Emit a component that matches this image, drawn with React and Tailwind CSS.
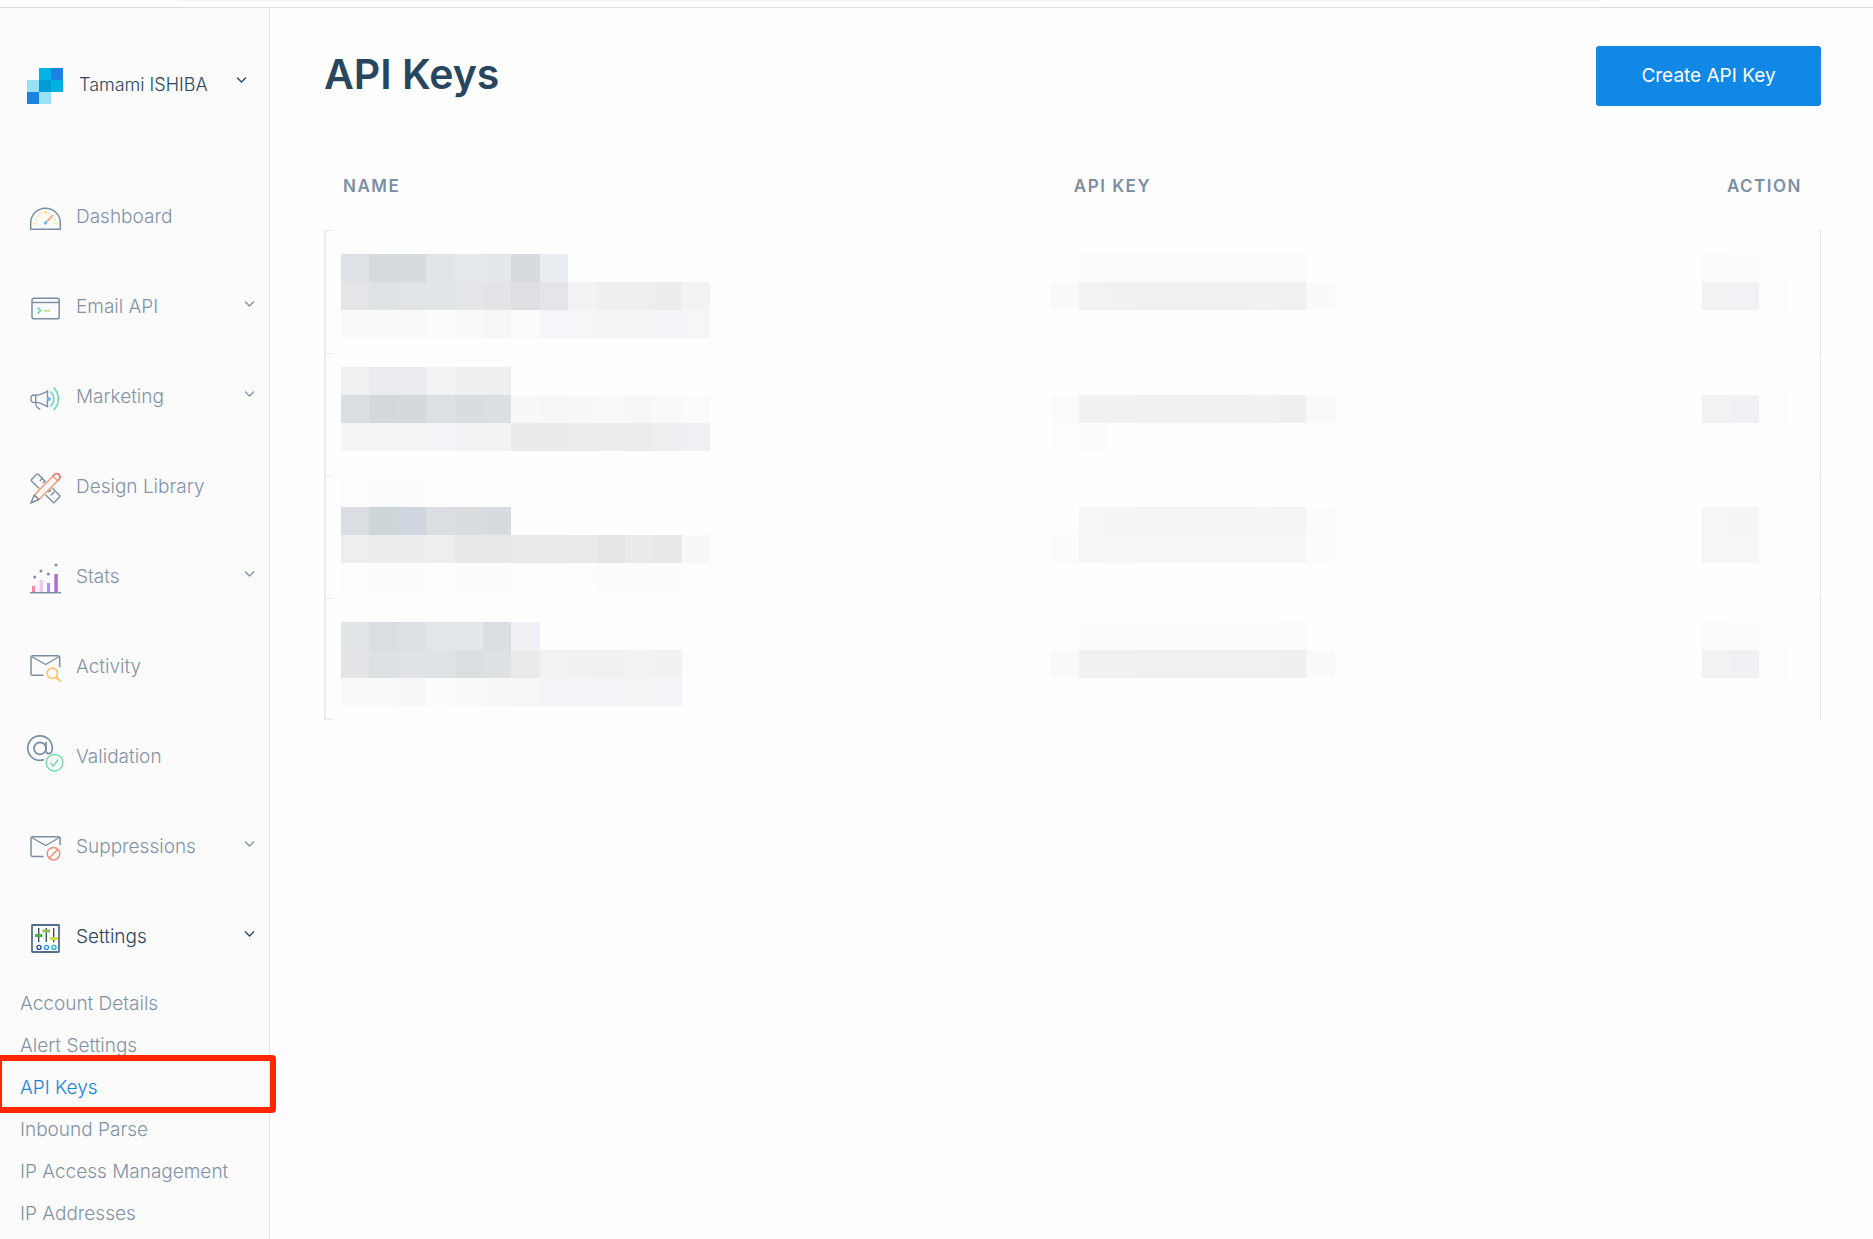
import React, { useState } from "react";

const SLATE = "#7b8ea3";

const ICONS = {
  dashboard: (
    <>
      <path d="M3.7 29.2V23a14.8 14.8 0 0 1 29.6 0v6.2Z" stroke={SLATE} strokeWidth="1.5" />
      <g fill="#ffe08a">
        <circle cx="18.5" cy="12.3" r="1.6" />
        <circle cx="14.3" cy="13.3" r="0.9" />
        <circle cx="22.7" cy="13.3" r="0.9" />
        <circle cx="11" cy="16" r="1" />
        <circle cx="9" cy="19.3" r="0.9" />
        <circle cx="28" cy="19.3" r="0.9" />
        <rect x="6.5" y="23" width="3" height="1.5" />
        <rect x="27.5" y="23" width="3" height="1.5" />
      </g>
      <path d="m19 22.5 7-7.5" stroke="#ff8f70" strokeWidth="1.5" />
      <circle cx="18.5" cy="23" r="1.7" fill="#70b8f5" />
    </>
  ),
  email: (
    <>
      <rect x="5" y="8.2" width="27.2" height="20.6" rx="1.8" stroke={SLATE} strokeWidth="1.5" />
      <path d="M5 12.5h27" stroke={SLATE} strokeWidth="1.4" />
      <path d="m10.7 17.8 3 2.8-3 2.8" stroke="#58dca0" strokeWidth="1.5" />
      <path d="M17 20.8h6" stroke="#b0d96a" strokeWidth="1.4" />
    </>
  ),
  marketing: (
    <>
      <path d="M8.7 15v7.5c0 3 1.6 5.5 4.6 6.8" stroke="#9284d0" strokeWidth="1.4" />
      <path
        d="M8.5 15.2h-3L4 16.8v4l1.500 1.600H9c4.500.2 7.500 1.800 11.500 4.200V11.200c-4 2.400-7.500 4-12 4Z"
        stroke={SLATE}
        strokeWidth="1.4"
      />
      <circle cx="22" cy="19" r="2" fill="#70b8f5" />
      <path d="M23.3 11.500c4.500 4 4.500 11 0 15" stroke="#52cfe3" strokeWidth="1.4" />
      <path d="M26.5 7.500c6.500 6.500 6.500 16 0 22.500" stroke="#58dca0" strokeWidth="1.4" />
    </>
  ),
  design: (
    <>
      <g stroke={SLATE} strokeWidth="1.4">
        <path d="M12.300 18.500 4.500 11c-.5-.5-.5-1 0-1.500l5.300-5.200c.5-.5 1-.5 1.500 0l7.500 7.700" />
        <path d="m12.800 11 3-3M15.800 13l2-2M24 19.800l-2.500 2.500M27.300 21.800l-3.500 3.500" />
        <path d="m25.300 18 7.200 7.500c.5.5.5 1 0 1.500l-5 5.300c-.5.5-1 .5-1.500 0l-7.500-7.500" />
      </g>
      <path d="M7.300 25 25.800 6.300l4.800 4.500L12 29.500Z" stroke="#ff9672" strokeWidth="1.5" />
      <path d="M7.300 25 4 32.800l8-3.300M7.300 25l4.700 4.500" stroke={SLATE} strokeWidth="1.5" />
      <path d="M25.800 6.300 28 4.200c3-2 6.500 1.500 4.500 4.600l-1.900 2" stroke="#e57373" strokeWidth="1.6" />
    </>
  ),
  stats: (
    <>
      <rect x="5" y="26" width="3" height="6" fill="#ff7fa5" />
      <rect x="12.5" y="20" width="3.5" height="12" fill="#ecc8f0" />
      <rect x="20" y="23" width="3" height="9" fill="#ab8dff" />
      <rect x="27.3" y="14" width="3.5" height="18" fill="#b06fc8" />
      <path d="M3 32.700h31" stroke={SLATE} strokeWidth="1.5" />
      <g fill={SLATE}>
        <circle cx="7.7" cy="17" r="1.5" />
        <circle cx="14" cy="11" r="1.5" />
        <circle cx="21.3" cy="14" r="1.5" />
        <circle cx="29" cy="5" r="1.5" />
      </g>
    </>
  ),
  activity: (
    <>
      <path
        d="M16.500 25.200H6a2 2 0 0 1-2-2V7.500A1.700 1.700 0 0 1 5.500 5.800H31A1.700 1.700 0 0 1 32.700 7.500V17"
        stroke={SLATE}
        strokeWidth="1.5"
      />
      <path d="m4.500 6.500 14.200 8 13.500-8" stroke={SLATE} strokeWidth="1.4" />
      <circle cx="25.3" cy="23.3" r="5.2" stroke="#ffc266" strokeWidth="1.6" />
      <path d="m29 27 4.500 4.500" stroke="#ffc266" strokeWidth="1.8" />
    </>
  ),
  validation: (
    <>
      <g stroke={SLATE} strokeWidth="1.7">
        <circle cx="13" cy="8.3" r="6" />
        <path d="M19 2v8.500c0 4.500 6.300 4.500 6.300-2.200A12.300 12.300 0 1 0 13 20.400c1.500 0 2.800-.2 4-.8" />
      </g>
      <circle cx="27.5" cy="22.7" r="8.3" stroke="#6edfa6" strokeWidth="1.5" />
      <path d="m23.500 23 2.800 3 5-6.500" stroke="#6edfa6" strokeWidth="1.5" />
    </>
  ),
  suppressions: (
    <>
      <path
        d="M16.500 26.400H6a2 2 0 0 1-2-2V8.500A1.700 1.700 0 0 1 5.500 6.800H31.500A1.700 1.700 0 0 1 33.200 8.500V15"
        stroke={SLATE}
        strokeWidth="1.5"
      />
      <path d="m4.500 7.500 14.200 8 13.800-8" stroke={SLATE} strokeWidth="1.4" />
      <circle cx="26.5" cy="23.7" r="6.3" stroke="#f08f7c" strokeWidth="1.5" />
      <path d="m22.200 28 8.600-8.600" stroke="#f08f7c" strokeWidth="1.5" />
    </>
  ),
  settings: (
    <>
      <rect x="5" y="5" width="27" height="27" rx="0.5" stroke="#546e8c" strokeWidth="1.8" />
      <path d="M11.700 8v14M19.300 8v14M26.700 8v14" stroke="#294661" strokeWidth="1.3" />
      <rect x="8" y="14" width="7.5" height="3" fill="#4caf50" />
      <rect x="15.5" y="9.5" width="7.5" height="3" fill="#8bc34a" />
      <rect x="23" y="17" width="7.5" height="3" fill="#cddc39" />
      <circle cx="12" cy="27.4" r="2" stroke="#303f9f" strokeWidth="1.3" />
      <circle cx="19.5" cy="27.4" r="2" stroke="#2196f3" strokeWidth="1.3" />
      <circle cx="27" cy="27.4" r="2" stroke="#00bcd4" strokeWidth="1.3" />
    </>
  ),
};

const NAV = [
  { id: "dashboard", label: "Dashboard" },
  { id: "email", label: "Email API", expandable: true },
  { id: "marketing", label: "Marketing", expandable: true },
  { id: "design", label: "Design Library" },
  { id: "stats", label: "Stats", expandable: true },
  { id: "activity", label: "Activity" },
  { id: "validation", label: "Validation" },
  { id: "suppressions", label: "Suppressions", expandable: true },
  { id: "settings", label: "Settings", expandable: true },
];

const SETTINGS_LINKS = [
  "Account Details",
  "Alert Settings",
  "API Keys",
  "Inbound Parse",
  "IP Access Management",
  "IP Addresses",
];

// Masked values: one string per mosaic line, one colour per block, "-" is blank
const ROWS = [
  {
    offset: "pt-6",
    name: [
      "#dee2e7 #d5dbdf #d6dbde #e0e4e7 #e5e9ec #e3e8eb #d6dadf #e9edf1 - - - - -",
      "#e4e5e9 #dde2e5 #e0e4e7 #e0e5e8 #e4e6e9 #e3e4e8 #dddfe3 #e4e5e9 #f2f3f5 #eeeff1 #edeef0 #ecedef #f2f3f5",
      "#fafafa #f9f9f9 #f9f9f9 #fbfbfb #f9fbfa #f7f7f7 #f9fcfb #f5f6f9 #f6f6f7 #f5f5f5 #f5f5f5 #f4f5f8 #f5f7f7",
    ],
    key: [
      "- #fbfbfb #fbfbfb #fbfbfb #fbfbfb #fbfbfb #fbfbfb #fbfbfb #fbfbfb #fefefe",
      "#fafafa #f2f2f2 #f1f1f1 #f0f0f0 #eff1f0 #f0f0f0 #f0f0f0 #f1f1f1 #eff1f0 #fafafa",
    ],
    action: ["#fbfbfb #fbfcfc -", "#f1f3f3 #f1f2f5 #fdfdfd"],
  },
  {
    offset: "pt-3.5",
    name: [
      "#eff0f2 #ebecf0 #ebecf0 #f2f3f5 #eeeff1 #eeeff1 - - - - - - -",
      "#dbdfe2 #d2d8dc #d5d8dd #dcdfe4 #d9dddf #dbdee3 #f8f8f8 #f7f7f7 #f8f8f8 #f9f9f9 #f7f7f7 #f9f9f9 #fafcfb",
      "#f3f5f7 #f3f5f4 #f4f4f4 #f3f4f7 #f1f3f5 #f2f3f5 #e9eaec #eaebed #ebecee #ecedee #ebecee #edeeef #eff0f3",
    ],
    key: [
      "- - - - - - - - - -",
      "#fbfbfb #f1f1f1 #f1f1f1 #f0f0f0 #f0f0f0 #f0f0f0 #f0f0f0 #f1f1f1 #efefef #f9f9f9",
      "#fdfdfd #fcfcfc - #fdfdfd #fdfdfd #fdfdfd #fdfdfd #fdfdfd #fdfdfd #fefefe",
    ],
    action: ["- - -", "#f0f2f4 #f0f1f4 #fdfdfd"],
  },
  {
    offset: "pt-1",
    name: [
      "#fdfdfd #fafbfd #fcfcfc #fdfdfd #fdfdfd #fcfefd - - - - - - -",
      "#dadde2 #ced5d9 #d0d6df #dadde2 #dadddf #d5dbdf - - - - - - -",
      "#edeeef #ebecec #ecedee #eeeeef #e7e8e9 #e7e8e9 #ebebed #eaebec #e9eaec #e4e5e7 #e9eaeb #e8e9ea #f8f8f8",
      "#fdfdfd #fcfcfc #fbfdfc #fcfdfd #fcfcfc #fcfcfc #fdfdfd #fdfdfd #fdfdfd #fcfcfc #fcfcfc #fcfcfc #fdfefe",
    ],
    key: [
      "- - - - - - - - - -",
      "#fefefc #f6f6f6 #f5f5f5 #f4f4f4 #f4f4f4 #f4f4f4 #f4f4f4 #f5f5f3 #f4f4f4 #fbfbfb",
      "#fbfbfb #f5f7f6 #f7f7f7 #f6f6f6 #f6f6f6 #f6f6f6 #f6f6f6 #f6f6f6 #f6f6f6 #fcfcfc",
    ],
    action: ["- - -", "#f5f6f7 #f5f5f7 #fefefe", "#f5f6f6 #f5f6f7 #fefefe"],
  },
  {
    offset: "pt-6",
    name: [
      "#e1e5e8 #dadde2 #dcdfe4 #e2e6e9 #e4e8ea #dadde2 #eff1f6 - - - - - -",
      "#e3e4e8 #dde1e4 #dfe2e6 #dfe3e6 #dbdfe2 #dde1e4 #e9eaec #f1f2f4 #f0f1f3 #f0f1f3 #f2f3f5 #f0f1f3 #fdfdfd",
      "#f9fbfa #f8faf9 #f8f8f8 #fbfdfc #f8f9f9 #f8f8f8 #f5f7f6 #f3f4f7 #f4f5f8 #f3f4f7 #f4f5f7 #f4f5f8 #fdfdfd",
    ],
    key: [
      "- #fcfcfc #fcfcfc #fcfcfc #fcfcfc #fcfcfc #fcfcfc #fcfcfc #fbfbfb -",
      "#fafafa #f1f1f1 #f1f1f1 #f0f0f0 #f0f0f0 #f0f0f0 #f0f0f0 #f0f0f0 #efefef #f9f9f9",
    ],
    action: ["#fbfbfb #fcfcfc -", "#f1f2f4 #f0f1f4 #fdfdfd"],
  },
];

function Chevron() {
  return (
    <svg width="11" height="8" viewBox="0 0 11 8" fill="none" aria-hidden="true">
      <path d="m1 1.500 4.500 4.500L10 1.500" stroke="currentColor" strokeWidth="1.3" />
    </svg>
  );
}

function Logo() {
  return (
    <svg width="36" height="36" viewBox="0 0 36 36" aria-hidden="true" shapeRendering="crispEdges">
      <rect x="12" width="12" height="12" fill="#00b2e3" />
      <rect x="24" width="12" height="12" fill="#1a82e2" />
      <rect y="12" width="12" height="12" fill="#99e1f4" />
      <rect x="12" y="12" width="12" height="12" fill="#009dd9" />
      <rect x="24" y="12" width="12" height="12" fill="#00b2e3" />
      <rect y="24" width="12" height="12" fill="#1a82e2" />
      <rect x="12" y="24" width="12" height="12" fill="#99e1f4" />
    </svg>
  );
}

function Mosaic({ lines, width }) {
  return (
    <div className={width} aria-hidden="true">
      {lines.map((line, i) => (
        <div key={i} className="flex h-7">
          {line.split(" ").map((color, j) => (
            <span
              key={j}
              className="flex-1"
              style={{ backgroundColor: color === "-" ? "transparent" : color }}
            />
          ))}
        </div>
      ))}
    </div>
  );
}

function NavItem({ item, active, onSelect }) {
  return (
    <li>
      <button
        type="button"
        onClick={() => onSelect(item.id)}
        className={`flex h-[90px] w-full items-center gap-[13px] pr-3.5 pl-[27px] text-left ${
          active ? "text-[#294661]" : "text-[#8293a7]"
        }`}
      >
        <svg
          width="36"
          height="36"
          viewBox="0 0 36 36"
          fill="none"
          className="shrink-0 overflow-visible"
          aria-hidden="true"
        >
          {ICONS[item.id]}
        </svg>
        <span className="flex-1 pb-0.5">{item.label}</span>
        {item.expandable && (
          <span className="pb-2">
            <Chevron />
          </span>
        )}
      </button>
    </li>
  );
}

function Sidebar() {
  const [section, setSection] = useState("settings");
  const [page, setPage] = useState("API Keys");

  return (
    <aside className="w-[270px] shrink-0 border-r border-[#e6e6e6] bg-[#fbfbfb]">
      <button
        type="button"
        className="flex h-[165px] w-full items-start gap-4 pt-[60px] pr-[22px] pl-[27px] text-left text-[18px] text-[#294661]"
      >
        <Logo />
        <span className="flex-1 leading-[34px]">Tamami ISHIBA</span>
        <span className="pt-2">
          <Chevron />
        </span>
      </button>

      <nav>
        <ul>
          {NAV.map((item) => (
            <NavItem
              key={item.id}
              item={item}
              active={item.id === section}
              onSelect={setSection}
            />
          ))}
        </ul>
        <ul>
          {SETTINGS_LINKS.map((label) => (
            <li key={label} className="relative">
              <a
                href="#settings"
                onClick={() => setPage(label)}
                className={`block pl-5 leading-[42px] ${
                  label === page ? "text-[#1a82e2]" : "text-[#8293a7]"
                }`}
              >
                {label}
              </a>
              {label === page && (
                <span className="pointer-events-none absolute -top-3 -right-[7px] -bottom-1 left-0 rounded-r-sm border-6 border-l-2 border-[#ff2600]" />
              )}
            </li>
          ))}
        </ul>
      </nav>
    </aside>
  );
}

function KeysTable() {
  return (
    <table className="mt-[68px] w-full table-fixed border-separate border-spacing-0">
      <colgroup>
        <col className="w-[17px]" />
        <col />
        <col className="w-[43.5%]" />
        <col className="w-[116px]" />
        <col className="w-[3px]" />
      </colgroup>
      <thead>
        <tr className="text-[17px] leading-6 font-semibold tracking-[1.5px] text-[#7b8ea3]">
          <td />
          <th className="pb-8 pl-0.5 text-left font-semibold">NAME</th>
          <th className="pb-8 pl-[23px] text-left font-semibold">API KEY</th>
          <th className="pr-4 pb-8 text-right font-semibold">ACTION</th>
          <td />
        </tr>
      </thead>
      <tbody>
        {ROWS.map((row, i) => (
          <tr key={i} className="group align-top">
            <td className="border-l-2 border-[#e6ebef] p-0">
              <div className="h-[123px] w-[7px] border-t border-[#e6ebef] group-last:border-b group-even:h-[122px]" />
            </td>
            <td className={`p-0 ${row.offset}`}>
              <Mosaic lines={row.name} width="w-[369px]" />
            </td>
            <td className={`p-0 ${row.offset}`}>
              <Mosaic lines={row.key} width="w-[284px]" />
            </td>
            <td className={`p-0 ${row.offset}`}>
              <Mosaic lines={row.action} width="w-[85px]" />
            </td>
            <td className="border-t border-r border-[#e6e9ec] p-0" />
          </tr>
        ))}
      </tbody>
    </table>
  );
}

function App() {
  return (
    <div className="flex min-h-screen flex-col overflow-hidden bg-[#fefefe] font-['Inter',sans-serif] text-[19px] font-light">
      <div className="h-2 border-b border-[#dcdcdc] bg-white pr-[272px] pl-[178px]">
        <div className="h-px rounded-b bg-[#f1f1f1]" />
      </div>
      <div className="flex flex-1">
        <Sidebar />
        <main className="min-w-0 flex-1 pt-[38px] pr-[52px] pl-[54px]">
          <div className="flex items-start justify-between">
            <h1 className="text-[41px] leading-[56px] font-semibold text-[#294661]">
              API Keys
            </h1>
            <button
              type="button"
              className="h-[60px] w-[225px] rounded-[3px] bg-[#1188e6] font-normal text-white"
            >
              Create API Key
            </button>
          </div>
          <KeysTable />
        </main>
      </div>
    </div>
  );
}

export default App;
